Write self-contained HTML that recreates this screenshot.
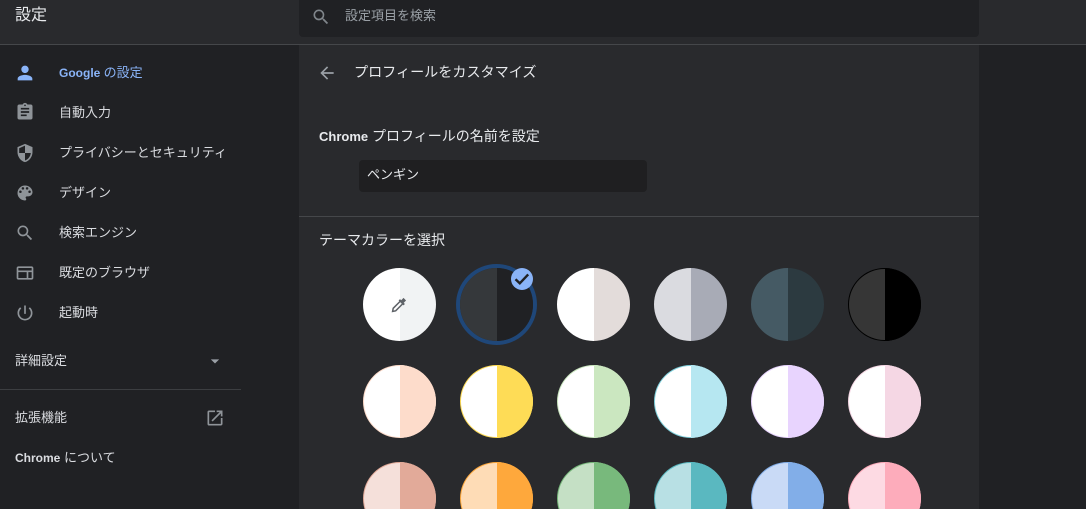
<!DOCTYPE html>
<html lang="ja">
<head>
<meta charset="utf-8">
<title>設定</title>
<style>
html,body{margin:0;padding:0;width:1086px;height:509px;overflow:hidden;background:#202124}
body{position:relative;font-family:"Liberation Sans","Noto Sans CJK JP",sans-serif;color:#e8eaed;font-size:13px}
.a{position:absolute;white-space:nowrap}
.hdr{left:0;top:0;width:1086px;height:44px;background:#292a2d}
.line{left:0;top:44px;width:1086px;height:1px;background:#45474a}
.search{left:299px;top:0;width:680px;height:37px;background:#202124;border-radius:0 0 4px 4px}
.main{left:299px;top:45px;width:680px;height:464px;background:#292a2d}
.nav{left:59px;font-size:13px;line-height:18px;color:#dadce0}
.ic{position:absolute;left:15px;width:20px;height:20px;fill:#8f9499}
.c{position:absolute;width:73px;height:73px;border-radius:50%;overflow:hidden}
.c i{position:absolute;left:0;top:0;width:37px;height:100%}
.c b{position:absolute;left:37px;top:0;width:36px;height:100%}
.c i.o{left:.6px;top:.6px;width:36.4px;height:71.8px;border-radius:36px 0 0 36px}
</style>
</head>
<body>
<div class="a hdr"></div>
<div class="a line"></div>
<div class="a search"></div>
<div class="a main"></div>

<div class="a" style="left:15px;top:6px;font-size:16px;line-height:20px;color:#e8eaed">設定</div>
<svg class="a" style="left:311px;top:7px;width:20px;height:20px;fill:#80868b" viewBox="0 0 24 24"><path d="M15.5 14h-.79l-.28-.27A6.47 6.47 0 0 0 16 9.5 6.5 6.5 0 1 0 9.5 16c1.61 0 3.09-.59 4.23-1.57l.27.28v.79l5 4.99L20.49 19l-4.99-5zm-6 0C7.01 14 5 11.99 5 9.5S7.01 5 9.5 5 14 7.01 14 9.5 11.99 14 9.5 14z"/></svg>
<div class="a" style="left:345px;top:6px;font-size:13px;line-height:19px;color:#9aa0a6">設定項目を検索</div>

<svg class="ic" style="left:14px;top:62px;width:22px;height:22px;fill:#8ab4f8" viewBox="0 0 24 24"><path d="M12 12c2.21 0 4-1.79 4-4s-1.79-4-4-4-4 1.79-4 4 1.79 4 4 4zm0 2c-2.67 0-8 1.34-8 4v2h16v-2c0-2.66-5.33-4-8-4z"/></svg>
<div class="a nav" style="top:64px;color:#8ab4f8;font-weight:700;font-size:12px">Google <span style="font-weight:400;font-size:13px">の設定</span></div>

<svg class="ic" style="top:102px" viewBox="0 0 24 24"><path d="M19 3h-4.18C14.4 1.84 13.3 1 12 1s-2.4.84-2.82 2H5c-1.1 0-2 .9-2 2v14c0 1.1.9 2 2 2h14c1.1 0 2-.9 2-2V5c0-1.1-.9-2-2-2zm-7 0c.55 0 1 .45 1 1s-.45 1-1 1-1-.45-1-1 .45-1 1-1zm2 14H7v-2h7v2zm3-4H7v-2h10v2zm0-4H7V7h10v2z"/></svg>
<div class="a nav" style="top:104px">自動入力</div>

<svg class="ic" style="top:143px" viewBox="0 0 24 24"><path d="M12 1 3 5v6c0 5.55 3.84 10.74 9 12 5.16-1.26 9-6.45 9-12V5l-9-4zm0 10.99h7c-.53 4.12-3.28 7.79-7 8.94V12H5V6.3l7-3.11v8.8z"/></svg>
<div class="a nav" style="top:144px">プライバシーとセキュリティ</div>

<svg class="ic" style="top:183px" viewBox="0 0 24 24"><path d="M12 3a9 9 0 0 0 0 18c.83 0 1.5-.67 1.5-1.5 0-.39-.15-.74-.39-1.01-.23-.26-.38-.61-.38-.99 0-.83.67-1.5 1.5-1.5H16c2.76 0 5-2.24 5-5 0-4.42-4.03-8-9-8zm-5.5 9a1.5 1.5 0 1 1 0-3 1.5 1.5 0 0 1 0 3zm3-4a1.5 1.5 0 1 1 0-3 1.5 1.5 0 0 1 0 3zm5 0a1.5 1.5 0 1 1 0-3 1.5 1.5 0 0 1 0 3zm3 4a1.5 1.5 0 1 1 0-3 1.5 1.5 0 0 1 0 3z"/></svg>
<div class="a nav" style="top:184px">デザイン</div>

<svg class="ic" style="top:223px" viewBox="0 0 24 24"><path d="M15.5 14h-.79l-.28-.27A6.47 6.47 0 0 0 16 9.5 6.5 6.5 0 1 0 9.5 16c1.61 0 3.09-.59 4.23-1.57l.27.28v.79l5 4.99L20.49 19l-4.99-5zm-6 0C7.01 14 5 11.99 5 9.5S7.01 5 9.5 5 14 7.01 14 9.5 11.99 14 9.5 14z"/></svg>
<div class="a nav" style="top:224px">検索エンジン</div>

<svg class="ic" style="top:263px" viewBox="0 0 24 24"><path d="M20 4H4c-1.1 0-2 .9-2 2v12c0 1.1.9 2 2 2h16c1.1 0 2-.9 2-2V6c0-1.1-.9-2-2-2zM4 18v-7h10v7H4zm16 0h-4v-7h4v7zm0-9H4V6h16v3z"/></svg>
<div class="a nav" style="top:264px">既定のブラウザ</div>

<svg class="ic" style="top:303px" viewBox="0 0 24 24"><path d="M13 3h-2v10h2V3zm4.83 2.17-1.42 1.42A6.92 6.92 0 0 1 19 12c0 3.87-3.13 7-7 7s-7-3.13-7-7c0-2.14.97-4.05 2.58-5.42L6.17 5.17A8.93 8.93 0 0 0 3 12a9 9 0 0 0 18 0c0-2.74-1.23-5.18-3.17-6.83z"/></svg>
<div class="a nav" style="top:304px">起動時</div>

<div class="a nav" style="left:15px;top:352px">詳細設定</div>
<svg class="a" style="left:205px;top:351px;width:20px;height:20px;fill:#9aa0a6" viewBox="0 0 24 24"><path d="M7 10l5 5 5-5z"/></svg>
<div class="a" style="left:0;top:389px;width:241px;height:1px;background:#3c3e41"></div>
<div class="a nav" style="left:15px;top:409px">拡張機能</div>
<svg class="a" style="left:205px;top:408px;width:20px;height:20px;fill:#8f9499" viewBox="0 0 24 24"><path d="M19 19H5V5h7V3H5a2 2 0 0 0-2 2v14a2 2 0 0 0 2 2h14c1.1 0 2-.9 2-2v-7h-2v7zM14 3v2h3.59l-9.83 9.83 1.41 1.41L19 6.41V10h2V3h-7z"/></svg>
<div class="a nav" style="left:15px;top:449px"><span style="font-weight:700;font-size:12px">Chrome</span> について</div>

<svg class="a" style="left:317px;top:63px;width:20px;height:20px;fill:#9aa0a6" viewBox="0 0 24 24"><path d="M20 11H7.83l5.59-5.59L12 4l-8 8 8 8 1.41-1.41L7.83 13H20v-2z"/></svg>
<div class="a" style="left:354px;top:62px;font-size:14.1px;line-height:21px;color:#e8eaed">プロフィールをカスタマイズ</div>
<div class="a" style="left:319px;top:127px;font-size:14px;line-height:18px;color:#e8eaed"><span style="font-weight:700;font-size:13px">Chrome</span> プロフィールの名前を設定</div>
<div class="a" style="left:359px;top:160px;width:288px;height:32px;background:#1f1f21;border-radius:4px"></div>
<div class="a" style="left:367px;top:166px;font-size:13px;line-height:18px;color:#e8eaed">ペンギン</div>
<div class="a" style="left:299px;top:216px;width:680px;height:1px;background:#45474a"></div>
<div class="a" style="left:319px;top:231px;font-size:14px;line-height:18px;color:#e8eaed">テーマカラーを選択</div>

<!-- row 1 -->
<div class="c" style="left:363px;top:268px"><i style="background:#fff"></i><b style="background:#f1f3f4"></b></div>
<svg class="a" style="left:391px;top:296px;width:17px;height:17px" viewBox="0 0 17 17" fill="none" stroke="#5f6368"><path d="M9.5 5 2.2 12.3 1.6 15.4 4.7 14.8 12 7.5" stroke-width="1.5"/><path d="M8.3 3.8 13.2 8.7" stroke-width="2"/><path d="M11 6 13.8 3.2" stroke-width="3.6"/></svg>
<div class="a" style="left:456px;top:264px;width:73px;height:73px;border:4px solid #1f4779;border-radius:50%"></div>
<div class="c" style="left:460px;top:268px"><i style="background:#35383b"></i><b style="background:#202124"></b></div>
<div class="a" style="left:511px;top:268px;width:22px;height:22px;border-radius:50%;background:#8ab4f8"></div>
<svg class="a" style="left:514px;top:271px;width:16px;height:16px" viewBox="0 0 16 16" fill="none" stroke="#202124" stroke-width="2.4"><path d="M1.5 8.2 5.8 12.3 14.2 3.4"/></svg>
<div class="c" style="left:557px;top:268px"><i style="background:#fff"></i><b style="background:#e3dcda"></b></div>
<div class="c" style="left:654px;top:268px"><i style="background:#dadbe0"></i><b style="background:#a8abb6"></b></div>
<div class="c" style="left:751px;top:268px"><i style="background:#455a64"></i><b style="background:#2c3a40"></b></div>
<div class="c" style="left:848px;top:268px;background:#000"><i class="o" style="background:#363636;left:1px;top:1px;width:36px;height:71px"></i><b style="background:#000"></b></div>
<!-- row 2 -->
<div class="c" style="left:363px;top:365px;background:#fddccb"><i class="o" style="background:#fff"></i><b style="background:#fddccb"></b></div>
<div class="c" style="left:460px;top:365px;background:#fedc56"><i class="o" style="background:#fff;left:1px;top:1px;width:36px;height:71px"></i><b style="background:#fedc56"></b></div>
<div class="c" style="left:557px;top:365px;background:#cbe7c0"><i class="o" style="background:#fff"></i><b style="background:#cbe7c0"></b></div>
<div class="c" style="left:654px;top:365px;background:#7fd0dc"><i class="o" style="background:#fff"></i><b style="background:#b6e7f1"></b></div>
<div class="c" style="left:751px;top:365px;background:#e8d4fe"><i class="o" style="background:#fff"></i><b style="background:#e8d4fe"></b></div>
<div class="c" style="left:848px;top:365px;background:#f5d7e4"><i class="o" style="background:#fff"></i><b style="background:#f5d7e4"></b></div>
<!-- row 3 -->
<div class="c" style="left:363px;top:462px;background:#e2aa99"><i class="o" style="background:#f5e0da"></i><b style="background:#e2aa99"></b></div>
<div class="c" style="left:460px;top:462px;background:#fea83c"><i class="o" style="background:#fedcb6"></i><b style="background:#fea83c"></b></div>
<div class="c" style="left:557px;top:462px;background:#78b97c"><i class="o" style="background:#c5e0c5"></i><b style="background:#78b97c"></b></div>
<div class="c" style="left:654px;top:462px;background:#5ab8c0"><i class="o" style="background:#b8e0e4"></i><b style="background:#5ab8c0"></b></div>
<div class="c" style="left:751px;top:462px;background:#82aee8"><i class="o" style="background:#c9daf6"></i><b style="background:#82aee8"></b></div>
<div class="c" style="left:848px;top:462px;background:#fdacbb"><i class="o" style="background:#fddae3"></i><b style="background:#fdacbb"></b></div>
</body>
</html>
